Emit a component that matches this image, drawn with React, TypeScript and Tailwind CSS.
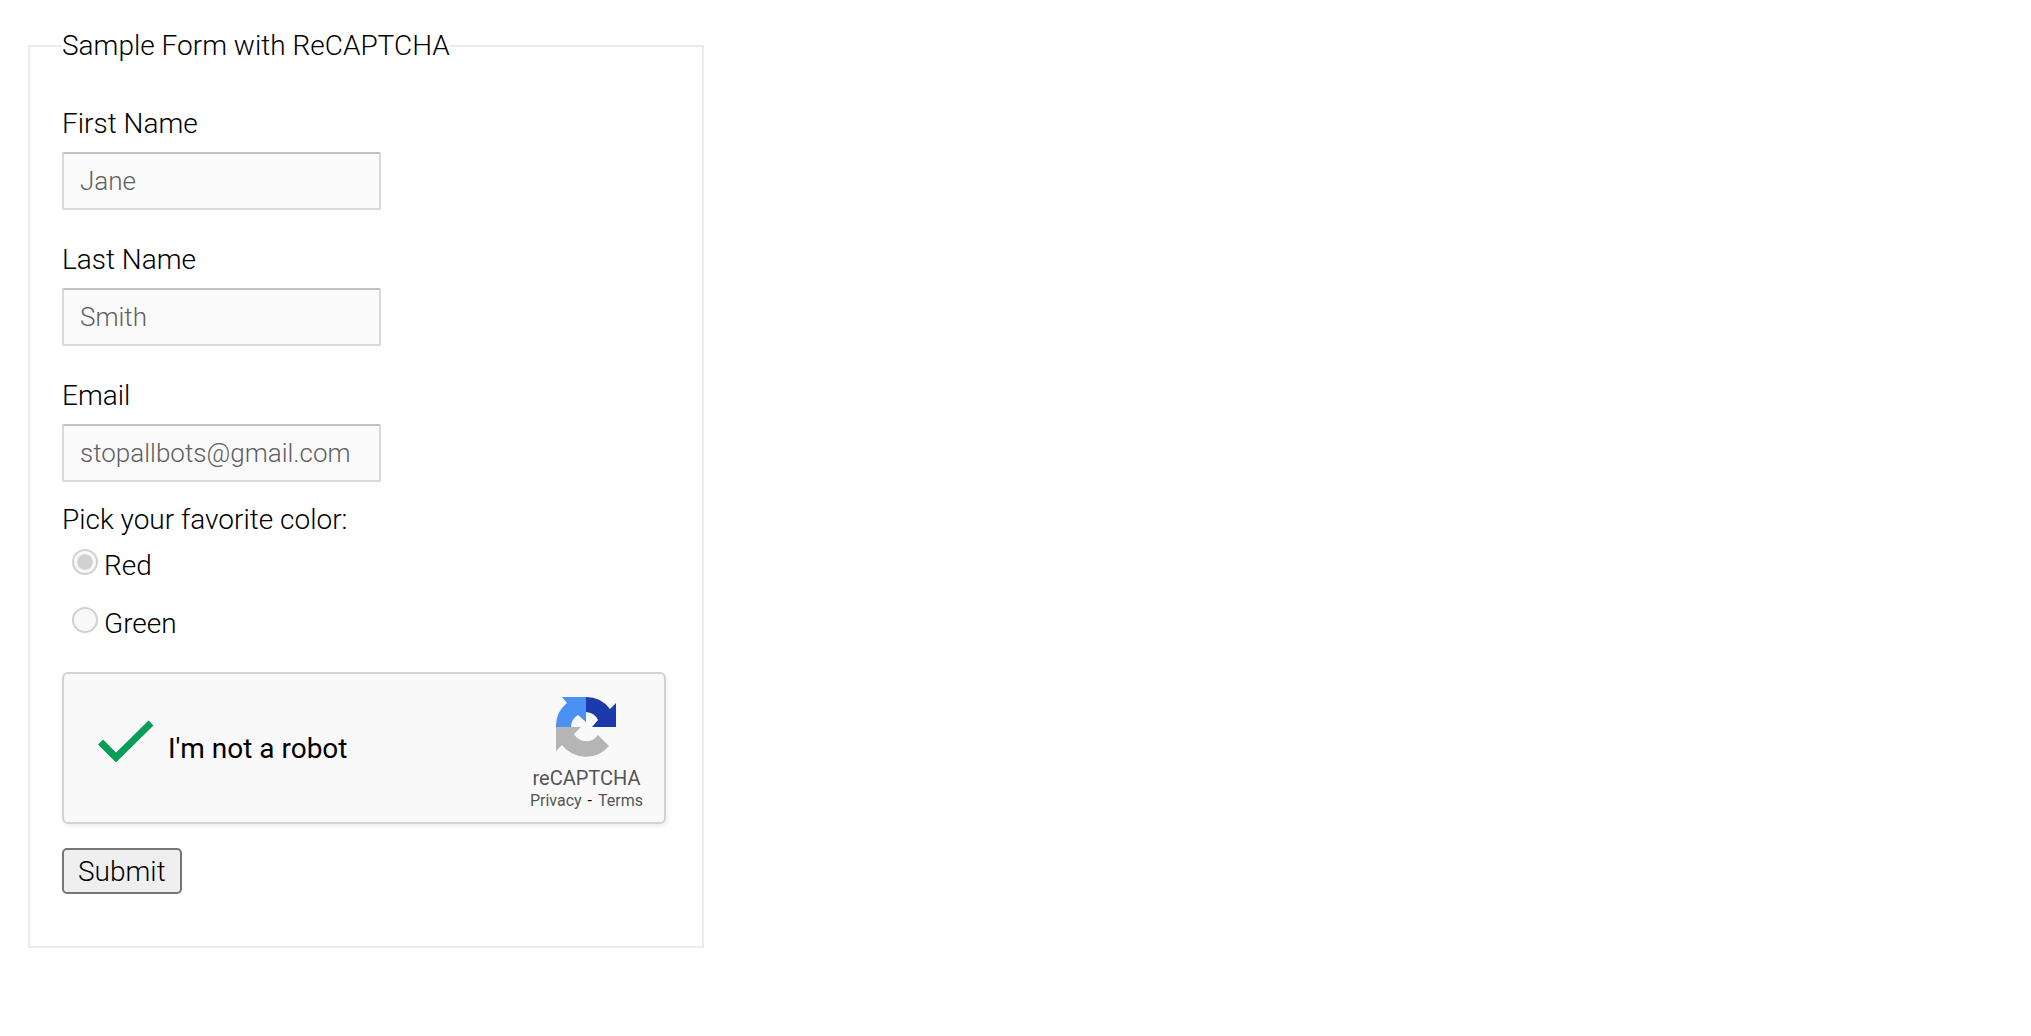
interface TextFieldProps {
  id: string;
  label: string;
  placeholder: string;
  type?: string;
}

function TextField({ id, label, placeholder, type = "text" }: TextFieldProps) {
  return (
    <div className="flex flex-col items-start gap-[11px]">
      <label htmlFor={id}>{label}</label>
      <input
        id={id}
        name={id}
        type={type}
        placeholder={placeholder}
        className="h-[58px] w-[319px] max-w-full rounded-[2px] border-2 border-[#d9d9d9] border-t-[#c0c0c0] bg-[#fafafa] px-4 text-[26px] font-light text-black placeholder:text-[#606060]"
      />
    </div>
  );
}

interface ColorOptionProps {
  value: string;
  label: string;
  defaultChecked?: boolean;
}

function ColorOption({ value, label, defaultChecked }: ColorOptionProps) {
  return (
    <label className="flex items-start gap-[6px] pl-[10px]">
      <input
        type="radio"
        name="color"
        value={value}
        defaultChecked={defaultChecked}
        className="mt-px size-[26px] appearance-none rounded-full border-2 border-[#d1d1d1] bg-[#f8f8f8] bg-clip-content p-[3px] shadow-[inset_0_0_0_3px_#f8f8f8] checked:bg-[#d1d1d1]"
      />
      {label}
    </label>
  );
}

function RecaptchaLogo() {
  return (
    <svg viewBox="0 0 60 60" className="size-[60px]" aria-hidden="true">
      <path
        d="M60 30V6L54 12A30 30 0 0 0 30 0V15A14 14 0 0 1 42 23L36 30Z"
        fill="#1c3aa9"
      />
      <path
        d="M30 0H6L11 6A30 30 0 0 0 0 30H15A14 14 0 0 1 22 18L30 25Z"
        fill="#4a90f5"
      />
      <path
        d="M0 30V54L6 48A30 30 0 0 0 53 49L42 38A14 14 0 0 1 18 37L25 30Z"
        fill="#b5b5b5"
      />
    </svg>
  );
}

function Recaptcha() {
  return (
    <div className="flex h-[152px] w-[604px] max-w-full justify-between rounded-md border-2 border-[#d3d3d3] bg-[#f9f9f9] pr-[21px] pl-[34px] font-normal shadow-[1px_2px_4px_rgba(0,0,0,0.08)]">
      <label className="flex items-center gap-[14px]">
        <span className="grid">
          <input
            type="checkbox"
            name="robot"
            defaultChecked
            className="peer col-start-1 row-start-1 h-[42px] w-14 appearance-none"
          />
          <svg
            viewBox="0 0 56 42"
            className="pointer-events-none invisible col-start-1 row-start-1 mb-[14px] h-[42px] w-14 peer-checked:visible"
            aria-hidden="true"
          >
            <path
              d="M2.500 22L18 37.500L53 3"
              fill="none"
              stroke="#0a9d58"
              strokeWidth="7"
            />
          </svg>
        </span>
        I'm not a robot
      </label>
      <div className="flex flex-col items-center pt-[23px] text-[#555]">
        <RecaptchaLogo />
        <div className="mt-[9px] text-[20px] leading-6">reCAPTCHA</div>
        <div className="flex gap-[6px] text-[16px] leading-[22px]">
          <a href="#privacy">Privacy</a>
          <span className="text-black">-</span>
          <a href="#terms">Terms</a>
        </div>
      </div>
    </div>
  );
}

export default function App() {
  return (
    <main className="min-h-screen bg-white p-7 font-['Roboto',sans-serif] text-[28px] leading-[35px] font-light text-black">
      <form onSubmit={(event) => event.preventDefault()}>
        <fieldset className="w-[676px] max-w-full border-2 border-[#ebebeb] px-8 pb-[52px]">
          <legend>Sample Form with ReCAPTCHA</legend>
          <div className="flex flex-col gap-8 pt-[43px]">
            <TextField id="first-name" label="First Name" placeholder="Jane" />
            <TextField id="last-name" label="Last Name" placeholder="Smith" />
            <TextField
              id="email"
              label="Email"
              placeholder="stopallbots@gmail.com"
              type="email"
            />
          </div>
          <div
            role="radiogroup"
            aria-labelledby="color-label"
            className="mt-5 flex flex-col items-start gap-[11px]"
          >
            <div id="color-label">Pick your favorite color:</div>
            <div className="flex flex-col items-start gap-[23px]">
              <ColorOption value="red" label="Red" defaultChecked />
              <ColorOption value="green" label="Green" />
            </div>
          </div>
          <div className="mt-[31px] mb-6">
            <Recaptcha />
          </div>
          <button
            type="submit"
            className="flex h-[46px] items-center rounded-[5px] border-2 border-[#767676] bg-[#efefef] px-[14px]"
          >
            Submit
          </button>
        </fieldset>
      </form>
    </main>
  );
}
